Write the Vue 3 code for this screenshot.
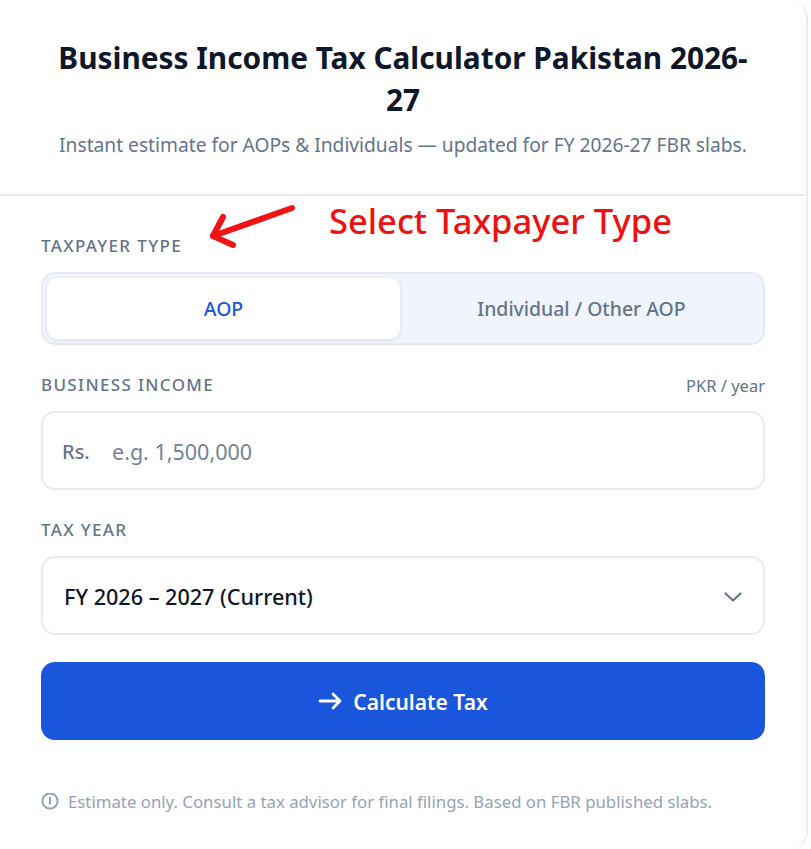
<script setup>
import { ref } from 'vue'

const taxpayerType = ref('aop')
</script>

<template>
  <div class="card">
    <header class="card-head">
      <h1>Business Income Tax Calculator Pakistan 2026-27</h1>
      <p>Instant estimate for AOPs &amp; Individuals — updated for FY 2026-27 FBR slabs.</p>
    </header>

    <div class="card-body">
      <div class="note">
        <svg class="note-arrow" width="90" height="56" viewBox="0 0 90 56" fill="none">
          <path d="M82 5 L3 33" stroke="#f01414" stroke-width="6" stroke-linecap="round" />
          <path d="M13 14 L3 33 L23 42" stroke="#f01414" stroke-width="6" stroke-linecap="round" stroke-linejoin="round" />
        </svg>
        <span class="note-text">Select Taxpayer Type</span>
      </div>

      <div class="label-row first">
        <label>TAXPAYER TYPE</label>
      </div>
      <div class="segment">
        <button :class="{ active: taxpayerType === 'aop' }" @click="taxpayerType = 'aop'">AOP</button>
        <button :class="{ active: taxpayerType === 'other' }" @click="taxpayerType = 'other'">Individual / Other AOP</button>
      </div>

      <div class="label-row">
        <label>BUSINESS INCOME</label>
        <span class="unit">PKR / year</span>
      </div>
      <div class="field">
        <span class="prefix">Rs.</span>
        <input type="text" placeholder="e.g. 1,500,000" />
      </div>

      <div class="label-row">
        <label>TAX YEAR</label>
      </div>
      <div class="field select">
        <span>FY 2026 – 2027 (Current)</span>
        <svg width="20" height="20" viewBox="0 0 20 20" fill="none">
          <path d="M2.5 6.5 L10 13.5 L17.5 6.5" stroke="#64748b" stroke-width="2.2" stroke-linecap="round" stroke-linejoin="round" />
        </svg>
      </div>

      <button class="submit">
        <svg width="24" height="24" viewBox="0 0 24 24" fill="none">
          <path d="M2 11 H22 M15 4 L22 11 L15 18" stroke="#fff" stroke-width="2.8" stroke-linecap="round" stroke-linejoin="round" />
        </svg>
        Calculate Tax
      </button>

      <p class="disclaimer">
        <svg width="18" height="18" viewBox="0 0 18 18" fill="none">
          <circle cx="9" cy="8" r="7.6" stroke="#94a3b8" stroke-width="2" />
          <path d="M9 4 V11.5" stroke="#94a3b8" stroke-width="2.2" />
        </svg>
        Estimate only. Consult a tax advisor for final filings. Based on FBR published slabs.
      </p>
    </div>
  </div>
</template>

<style>
body {
  background: #fff;
}
</style>

<style scoped>
.card {
  box-sizing: border-box;
  width: 808px;
  height: 849px;
  background: #fff;
  border-right: 2px solid #e8ebef;
  border-radius: 0 18px 18px 18px;
  font-family: "Noto Sans", sans-serif;
  overflow: hidden;
}

.card-head {
  box-sizing: border-box;
  height: 196px;
  padding: 37px 40px 0;
  border-bottom: 2px solid #e8ebef;
  text-align: center;
}

.card-head h1 {
  margin: 0;
  padding: 0 10px;
  font-size: 29.8px;
  line-height: 42px;
  font-weight: 700;
  color: #0f172a;
}

.card-head p {
  margin: 11px -20px 0;
  font-size: 19.2px;
  line-height: 26px;
  color: #64748b;
}

.card-body {
  position: relative;
  padding: 0 41px;
}

.note {
  position: absolute;
  top: 0;
  left: 0;
  width: 100%;
}

.note-arrow {
  position: absolute;
  top: 7px;
  left: 210px;
}

.note-text {
  position: absolute;
  top: 2px;
  left: 329px;
  font-size: 34.5px;
  line-height: 46px;
  font-weight: 500;
  color: #ee1111;
  white-space: nowrap;
}

.label-row {
  display: flex;
  justify-content: space-between;
  align-items: flex-end;
  height: 22px;
  margin-bottom: 15px;
}

.label-row.first {
  padding-top: 39px;
}

.label-row label {
  font-size: 17px;
  line-height: 22px;
  font-weight: 500;
  letter-spacing: 1.35px;
  color: #64748b;
}

.unit {
  font-size: 16.5px;
  line-height: 20px;
  color: #64748b;
}

.segment {
  box-sizing: border-box;
  display: flex;
  height: 73px;
  padding: 4px;
  background: #eff4fd;
  border: 2px solid #e4eaf5;
  border-radius: 14px;
  margin-bottom: 29px;
}

.segment button {
  flex: 1;
  padding: 0 0 0 4px;
  border: 0;
  background: transparent;
  border-radius: 10px;
  font-family: inherit;
  font-size: 19.4px;
  font-weight: 500;
  color: #64748b;
}

.segment button:first-child {
  flex: 0 0 353px;
  padding: 0;
}

.segment button.active {
  background: #fff;
  color: #1a56db;
  box-shadow: 0 1px 4px rgba(15, 23, 42, 0.1);
}

.field {
  box-sizing: border-box;
  display: flex;
  align-items: center;
  height: 79px;
  padding: 2px 21px 0 19px;
  background: #fff;
  border: 2px solid #e8ebef;
  border-radius: 14px;
  margin-bottom: 29px;
}

.prefix {
  width: 50px;
  flex: none;
  font-size: 20px;
  font-weight: 500;
  color: #64748b;
}

.field input {
  flex: 1;
  min-width: 0;
  border: 0;
  outline: 0;
  padding: 0;
  font-family: inherit;
  font-size: 21.5px;
  color: #0f172a;
}

.field input::placeholder {
  color: #758295;
  opacity: 1;
}

.select {
  justify-content: space-between;
  padding: 2px 20px 0 21px;
  margin-bottom: 27px;
  font-size: 21.6px;
  font-weight: 500;
  color: #0f172a;
}

.submit {
  display: flex;
  align-items: center;
  justify-content: center;
  gap: 11px;
  width: 100%;
  height: 78px;
  padding-top: 2px;
  border: 0;
  border-radius: 14px;
  background: #1a56db;
  color: #fff;
  font-family: inherit;
  font-size: 21px;
  font-weight: 600;
}

.disclaimer {
  display: flex;
  align-items: center;
  gap: 9px;
  margin: 51px 0 0;
  font-size: 16.8px;
  line-height: 22px;
  color: #94a3b8;
}
</style>
